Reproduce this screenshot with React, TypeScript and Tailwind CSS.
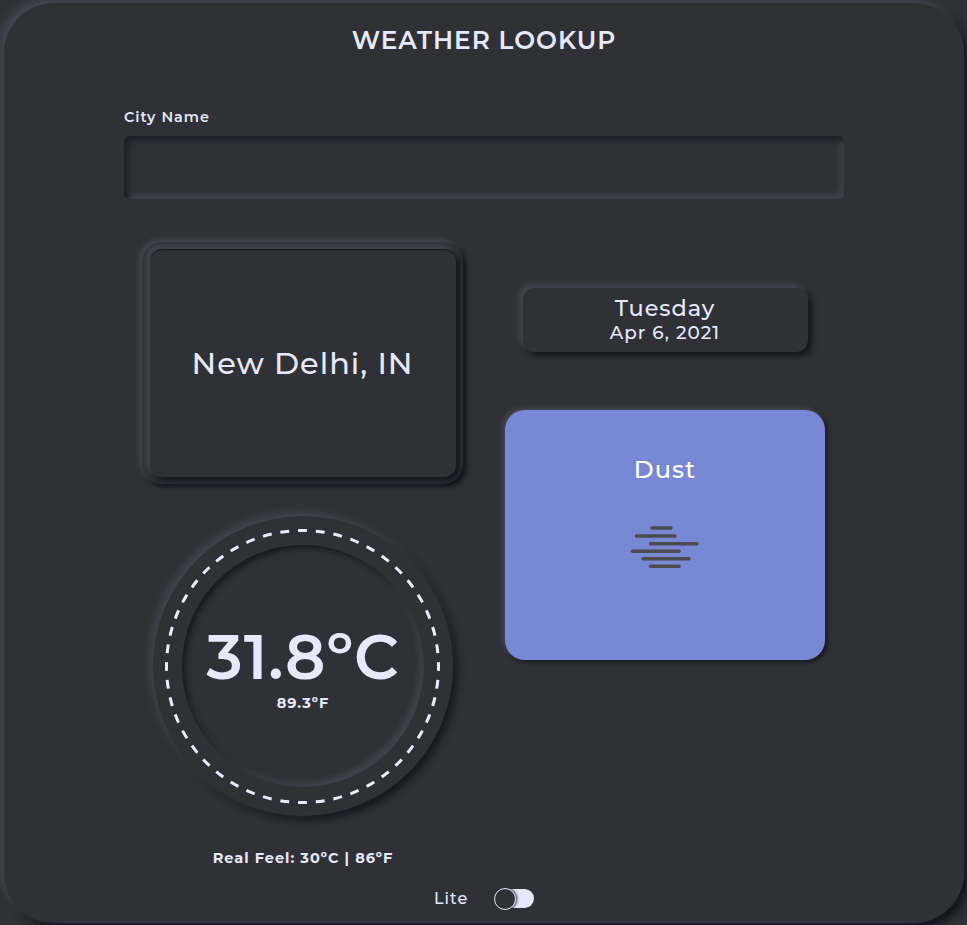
const HAZE_LINES = [
  [652, 671, 528],
  [636.5, 675, 536],
  [650.5, 697, 543.8],
  [632.5, 679, 551.3],
  [643, 689, 558.8],
  [650.5, 679, 566.3],
];

function CityCard() {
  return (
    <div className="mt-[43px] mr-[2px] flex h-[242px] w-[321px] rounded-[20px] pt-[7px] pr-[7px] pb-[7px] pl-2 shadow-[-3px_-3px_5px_#454552,3px_3px_5px_#13131e]">
      <div className="flex grow items-center justify-center rounded-xl bg-[#303136] pt-[2px] text-[30.4px] font-medium shadow-[-4px_-4px_6px_#454552,4px_4px_6px_#13131e,inset_0_1px_0_#171820]">
        <span className="tracking-[1px]">New Delhi, IN</span>
      </div>
    </div>
  );
}

function Thermometer() {
  return (
    <div className="mt-8 grid size-[300px] place-items-center rounded-full bg-[#303136] shadow-[-4px_-4px_8px_#454552,4px_4px_8px_#13131e]">
      <svg className="col-start-1 row-start-1 size-[300px]" viewBox="0 0 300 300" fill="none">
        <circle cx="149.5" cy="150.5" r="136" stroke="#ebecff" strokeWidth="3" pathLength="96" strokeDasharray="1 1" strokeDashoffset="0.5" />
      </svg>
      <div className="col-start-1 row-start-1 flex size-[242px] flex-col items-center rounded-full pt-[79px] shadow-[inset_3px_3px_6px_#171720,inset_-4px_-4px_6px_#454552]">
        <span className="text-[62px] leading-[66px] font-semibold tracking-[1px]">31.8ºC</span>
        <span className="mt-[4px] text-[14.5px] leading-[18px] font-bold tracking-[1px]">89.3ºF</span>
      </div>
    </div>
  );
}

function WeatherCard() {
  return (
    <div className="mt-[58px] flex h-[250px] w-[320px] flex-col items-center rounded-[20px] bg-[#7988d4] text-white shadow-[-2px_-2px_5px_#4a4a55,2px_2px_5px_#13131e]">
      <span className="mt-[44px] text-2xl leading-8 font-medium tracking-[1.1px]">Dust</span>
      <svg className="mt-[34px] h-[60px] w-20" viewBox="625 520 80 60" stroke="#4b4b50" strokeWidth="3.4" strokeLinecap="round">
        {HAZE_LINES.map(([x1, x2, y]) => (
          <line key={y} x1={x1} x2={x2} y1={y} y2={y} />
        ))}
      </svg>
    </div>
  );
}

export default function App() {
  return (
    <div className="h-[925px] w-[967px] overflow-hidden bg-[#303136] pt-[3px] pl-1 font-[Montserrat,Inter,'Open_Sans',sans-serif] text-[#e6e9ff]">
      <main className="flex h-[920px] w-[960px] flex-col items-center rounded-[50px] bg-[#303136] shadow-[-5px_-5px_8px_#454552,5px_5px_8px_#13131e]">
        <h1 className="mt-[21px] text-[24.8px] leading-8 font-semibold tracking-[1px]">WEATHER LOOKUP</h1>
        <label className="mt-[53px] flex w-[720px] flex-col text-[14.4px] font-semibold">
          <span className="h-[27px] leading-[16px] tracking-[1px]">City Name</span>
          <input className="h-[63px] w-full rounded-[5px] px-4 outline-none shadow-[inset_5px_5px_5px_#20202a,inset_-5px_-5px_5px_#3e3e49]" />
        </label>
        <div className="flex h-[680px] w-[722px] gap-[2px]">
          <section className="flex w-[360px] flex-col items-center">
            <CityCard />
            <Thermometer />
            <p className="mt-[31px] text-[14.5px] leading-[22px] font-bold tracking-[1px]">Real Feel: 30ºC | 86ºF</p>
          </section>
          <section className="flex w-[360px] flex-col items-center">
            <div className="mt-[89px] flex h-16 w-[285px] flex-col items-center rounded-xl pt-[6px] shadow-[-4px_-4px_6px_#454552,4px_4px_6px_#13131e]">
              <span className="text-[22.4px] leading-7 font-medium tracking-[1px]">Tuesday</span>
              <span className="mt-px text-[18.4px] leading-5 font-medium tracking-[1px]">Apr 6, 2021</span>
            </div>
            <WeatherCard />
          </section>
        </div>
        <button type="button" className="mt-[9px] flex h-[22px] w-[100px] items-center justify-between">
          <span className="text-base leading-5 font-medium tracking-[1.1px]">Lite</span>
          <span className="mb-px flex h-[19px] w-[39px] items-center rounded-full bg-[#e6e9ff]">
            <span className="mt-px -ml-px size-[22px] shrink-0 rounded-full border border-[#e6e9ff] bg-[#303136] shadow-[1px_0_3px_#303136]" />
          </span>
        </button>
      </main>
    </div>
  );
}
